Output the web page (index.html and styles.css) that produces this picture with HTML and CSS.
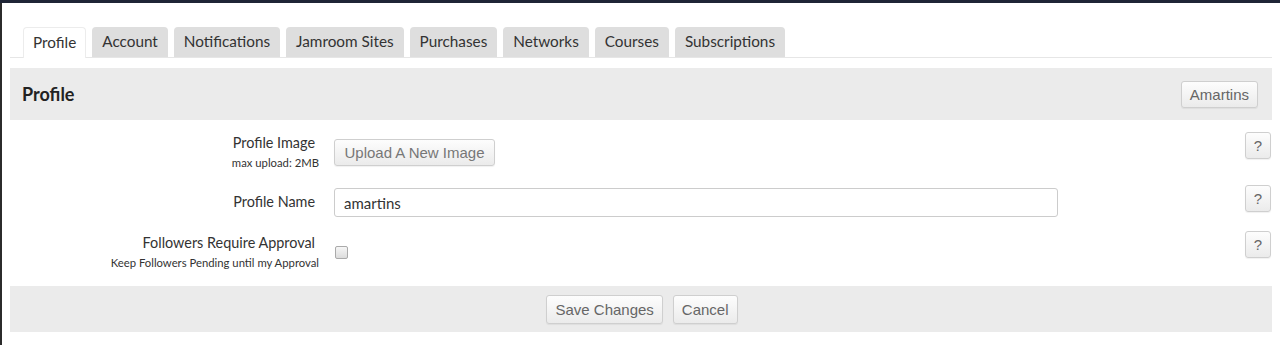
FILE: index.html
```html
<!DOCTYPE html>
<html lang="en">
<head>
    <meta charset="UTF-8">
    <title>Profile Settings</title>
    <link rel="stylesheet" href="styles.css">
</head>
<body>

    <div class="topbar"></div>

    <div id="container">

        <ul class="tabs">
            <li class="tab active">Profile</li>
            <li class="tab">Account</li>
            <li class="tab">Notifications</li>
            <li class="tab">Jamroom Sites</li>
            <li class="tab">Purchases</li>
            <li class="tab">Networks</li>
            <li class="tab">Courses</li>
            <li class="tab">Subscriptions</li>
        </ul>

        <div class="page-header">
            <h2>Profile</h2>
            <button class="btn">Amartins</button>
        </div>

        <form>
            <div class="row row-image">
                <div class="label">
                    <div class="main">Profile Image</div>
                    <div class="sub">max upload: 2MB</div>
                </div>
                <div class="control">
                    <button type="button" class="btn btn-upload">Upload A New Image</button>
                </div>
                <button type="button" class="btn help">?</button>
            </div>

            <div class="row row-name">
                <div class="label">
                    <div class="main">Profile Name</div>
                </div>
                <div class="control">
                    <input type="text" class="text-input" value="amartins">
                </div>
                <button type="button" class="btn help">?</button>
            </div>

            <div class="row row-approval">
                <div class="label">
                    <div class="main">Followers Require Approval</div>
                    <div class="sub">Keep Followers Pending until my Approval</div>
                </div>
                <div class="control">
                    <span class="checkbox"></span>
                </div>
                <button type="button" class="btn help">?</button>
            </div>

            <div class="form-footer">
                <button type="button" class="btn btn-big">Save Changes</button>
                <button type="button" class="btn btn-big">Cancel</button>
            </div>
        </form>

    </div>

</body>
</html>
```

FILE: styles.css
```css
body {
    margin: 0;
    background-color: #fff;
    font-family: Lato, "Open Sans", sans-serif;
    color: #333;
}
.topbar {
    height: 3px;
    background-color: #1f2536;
}
#container {
    height: 342px;
    border-left: 2px solid #2b2b2b;
    padding: 0 8px;
}

/* tabs */
.tabs {
    display: flex;
    gap: 6px;
    list-style: none;
    margin: 0;
    padding: 24px 0 0 13px;
    border-bottom: 1px solid #e6e6e6;
}
.tab {
    height: 30px;
    line-height: 29px;
    padding: 0 10px;
    font-size: 15.3px;
    color: #333;
    background-color: #dedede;
    border-radius: 4px 4px 0 0;
}
.tab.active {
    background-color: #fff;
    border: 1px solid #ececec;
    border-bottom: none;
    padding: 0 9px;
    margin-bottom: -1px;
}

/* header band */
.page-header {
    display: flex;
    align-items: center;
    justify-content: space-between;
    height: 52px;
    margin-top: 10px;
    padding: 0 14px 0 12px;
    background-color: #ebebeb;
}
.page-header h2 {
    margin: 0;
    font-size: 18px;
    font-weight: bold;
    color: #222;
}

/* buttons */
.btn {
    font-family: "Liberation Sans", Arial, sans-serif;
    font-size: 15px;
    color: #666;
    height: 27px;
    padding: 0 8px;
    background: linear-gradient(#fdfdfd, #ebebeb);
    border: 1px solid #cfcfcf;
    border-radius: 3px;
    box-shadow: 0 1px 1px rgba(0, 0, 0, 0.06);
}
.btn-upload {
    width: 161px;
    padding: 0;
    color: #777;
}
.btn-big {
    height: 29px;
    padding: 0 8px;
}
.help {
    width: 26px;
    padding: 0;
    margin-left: auto;
    margin-right: 1px;
    flex-shrink: 0;
}

/* form rows */
.row {
    display: flex;
    align-items: flex-start;
    box-sizing: border-box;
}
.label {
    width: 309px;
    flex-shrink: 0;
    text-align: right;
}
.label .main {
    font-size: 14.4px;
    line-height: 20px;
    color: #333;
    padding-right: 4px;
}
.label .sub {
    font-size: 11.3px;
    line-height: 16px;
    margin-top: 2px;
    color: #333;
}
.control {
    margin-left: 15px;
}

.row-image {
    height: 56px;
    padding-top: 12px;
}
.row-image .label {
    margin-top: 1px;
}
.row-image .control {
    margin-top: 7px;
}

.row-name {
    height: 46px;
    padding-top: 9px;
}
.row-name .label {
    margin-top: 7px;
}
.row-name .control {
    margin-top: 3px;
}
.text-input {
    box-sizing: border-box;
    width: 724px;
    height: 29px;
    padding: 0 9px;
    font-family: Lato, sans-serif;
    font-size: 15px;
    color: #333;
    border: 1px solid #ccc;
    border-radius: 3px;
}

.row-approval {
    height: 64px;
    padding-top: 9px;
}
.row-approval .label {
    margin-top: 2px;
}
.row-approval .control {
    margin-top: 15px;
    margin-left: 16px;
}
.checkbox {
    display: block;
    width: 11px;
    height: 11px;
    border: 1px solid #aaa;
    border-radius: 2px;
    background: linear-gradient(#f6f6f6, #dcdcdc);
}

.form-footer {
    display: flex;
    justify-content: center;
    align-items: center;
    gap: 10px;
    height: 46px;
    padding-left: 2px;
    background-color: #ebebeb;
}
```
